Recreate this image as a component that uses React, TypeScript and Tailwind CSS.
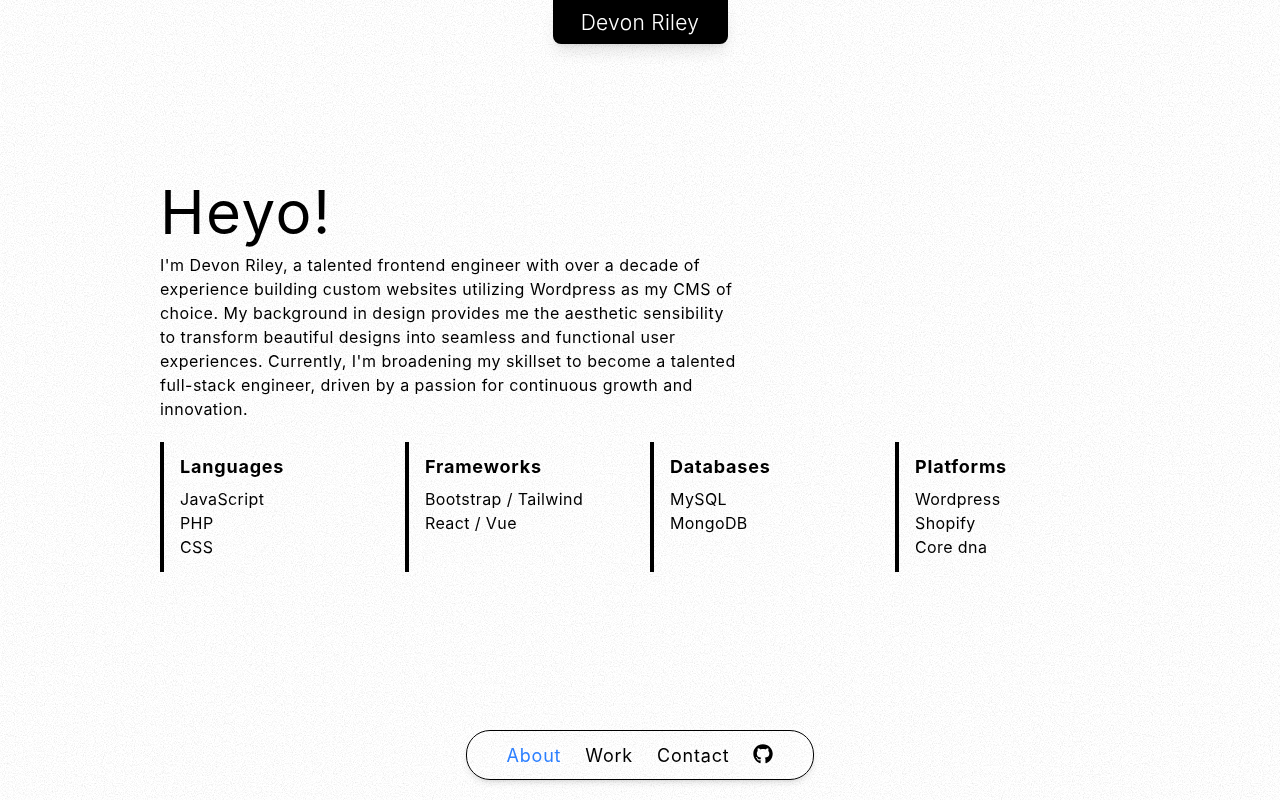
import { FaGithub } from 'react-icons/fa';

const stacks = [
  { title: 'Languages', items: ['JavaScript', 'PHP', 'CSS'] },
  { title: 'Frameworks', items: ['Bootstrap / Tailwind', 'React / Vue'] },
  { title: 'Databases', items: ['MySQL', 'MongoDB'] },
  { title: 'Platforms', items: ['Wordpress', 'Shopify', 'Core dna'] },
];

function Grain() {
  return (
    <svg className="pointer-events-none fixed inset-0 h-full w-full" aria-hidden="true">
      <filter id="grain">
        <feTurbulence type="fractalNoise" baseFrequency="0.9" numOctaves="2" seed="4" stitchTiles="stitch" />
        <feColorMatrix type="matrix" values="0 0 0 0 0.5  0 0 0 0 0.5  0 0 0 0 0.5  1.2 1.2 0 0 -1.12" />
      </filter>
      <rect width="100%" height="100%" filter="url(#grain)" opacity="0.42" />
    </svg>
  );
}

export default function App() {
  return (
    <div className="relative flex h-screen flex-col items-center overflow-hidden bg-white font-['Inter',sans-serif] text-black">
      <Grain />

      <header className="relative flex h-11 w-[175px] items-center justify-center rounded-b-lg bg-black pt-[1px] text-[21px] font-light tracking-[0.3px] text-white shadow-lg">
        Devon Riley
      </header>

      <main className="relative mt-[130px] w-[960px] flex-1">
        <h1 className="text-[60px] leading-[76px] font-normal tracking-[1.5px]">Heyo!</h1>
        <p className="mt-[3px] w-[580px] text-base leading-6 tracking-[0.48px]">
          I'm Devon Riley, a talented frontend engineer with over a decade of experience building custom websites
          utilizing Wordpress as my CMS of choice. My background in design provides me the aesthetic sensibility to
          transform beautiful designs into seamless and functional user experiences. Currently, I'm broadening my
          skillset to become a talented full-stack engineer, driven by a passion for continuous growth and innovation.
        </p>
        <div className="mt-[21px] grid grid-cols-4 gap-5">
          {stacks.map((stack) => (
            <div key={stack.title} className="h-[130px] border-l-4 border-black pt-[13px] pl-4">
              <h2 className="text-lg leading-6 font-bold tracking-[0.8px]">{stack.title}</h2>
              <ul className="mt-2 text-base leading-6 tracking-[0.4px]">
                {stack.items.map((item) => (
                  <li key={item}>{item}</li>
                ))}
              </ul>
            </div>
          ))}
        </div>
      </main>

      <nav className="relative mb-5 flex h-[50px] w-[348px] items-center justify-center gap-6 rounded-3xl border border-black text-lg tracking-[0.8px] shadow-md">
        <a className="mt-0.5 text-blue-500">About</a>
        <a className="mt-0.5">Work</a>
        <a className="mt-0.5">Contact</a>
        <a className="mb-[2px]"><FaGithub className="h-5 w-5" /></a>
      </nav>
    </div>
  );
}
